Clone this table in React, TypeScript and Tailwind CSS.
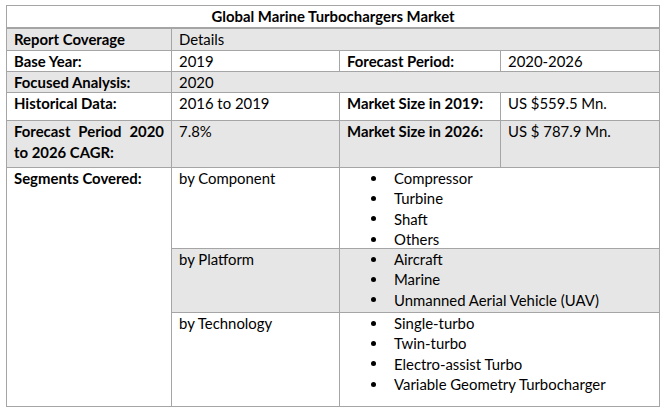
const rows = {
  component: ["Compressor", "Turbine", "Shaft", "Others"],
  platform: ["Aircraft", "Marine", "Unmanned Aerial Vehicle (UAV)"],
  technology: ["Single-turbo", "Twin-turbo", "Electro-assist Turbo", "Variable Geometry Turbocharger"],
};

function Bullets({ items }: { items: string[] }) {
  return (
    <ul className="pl-[31px]">
      {items.map((item) => (
        <li key={item} className="flex items-center leading-[20.3px]">
          <span className="w-[23px] shrink-0">
            <span className="block w-[5px] h-[5px] rounded-full bg-black" />
          </span>
          <span>{item}</span>
        </li>
      ))}
    </ul>
  );
}

export default function App() {
  const white = "bg-white px-[7px]";
  const gray = "bg-[#e7e6e6] px-[7px]";
  return (
    <div className="w-[665px] h-[412px] bg-white pt-[5px] pl-[6px] text-[14.9px] leading-[20px] text-black font-['Lato',sans-serif]">
      <div className="grid w-[654px] grid-cols-[164px_167px_160px_158px] grid-rows-[22px_21px_20px_20px_27px_46px_80px_63px_93px] gap-px p-px bg-[#a5a5a5]">
        <div className="col-span-4 bg-white border-b border-[#a5a5a5] text-center font-bold">
          Global Marine Turbochargers Market
        </div>

        <div className={`${gray} font-bold`}>Report Coverage</div>
        <div className={`${gray} col-span-3`}>Details</div>

        <div className={`${white} font-bold`}>Base Year:</div>
        <div className={white}>2019</div>
        <div className={`${white} font-bold`}>Forecast Period:</div>
        <div className={white}>2020-2026</div>

        <div className={`${gray} font-bold`}>Focused Analysis:</div>
        <div className={`${gray} col-span-3`}>2020</div>

        <div className={`${white} font-bold`}>Historical Data:</div>
        <div className={white}>2016 to 2019</div>
        <div className={`${white} font-bold`}>Market Size in 2019:</div>
        <div className={white}>US $559.5 Mn.</div>

        <div className={`${gray} font-bold leading-[21px]`}>
          <div className="text-justify [text-align-last:justify]">Forecast Period 2020</div>
          <div>to 2026 CAGR:</div>
        </div>
        <div className={`${gray} leading-[21px]`}>7.8%</div>
        <div className={`${gray} font-bold leading-[21px]`}>Market Size in 2026:</div>
        <div className={`${gray} leading-[21px]`}>US $ 787.9 Mn.</div>

        <div className={`${white} font-bold row-span-3`}>Segments Covered:</div>
        <div className={white}>by Component</div>
        <div className="bg-white col-span-2">
          <Bullets items={rows.component} />
        </div>

        <div className={gray}>by Platform</div>
        <div className="bg-[#e7e6e6] col-span-2">
          <Bullets items={rows.platform} />
        </div>

        <div className={white}>by Technology</div>
        <div className="bg-white col-span-2">
          <Bullets items={rows.technology} />
        </div>
      </div>
    </div>
  );
}
